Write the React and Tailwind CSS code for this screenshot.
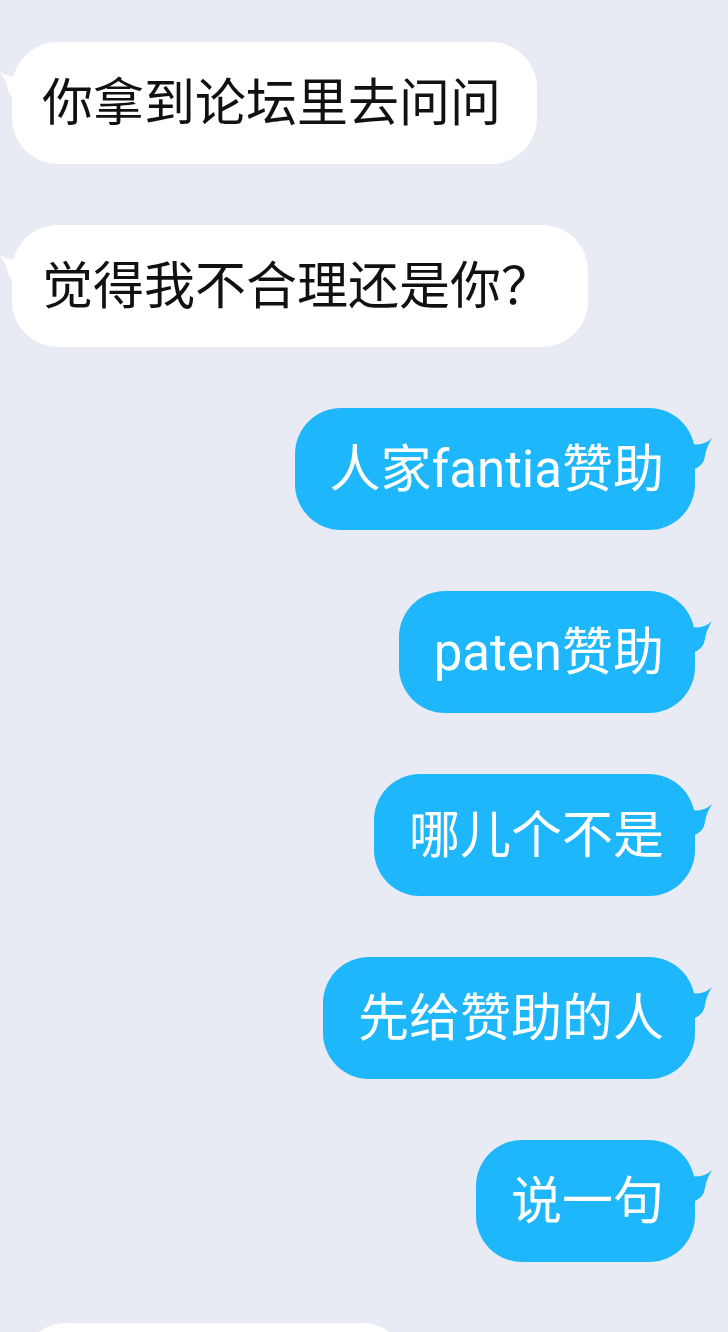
import React from "react";

const font = { fontFamily: 'Roboto, "Noto Sans CJK SC", sans-serif' };

function TailLeft() {
  return (
    <svg className="absolute left-[-12px] top-[26px]" width="20" height="34" viewBox="0 0 20 34">
      <path d="M20 8 Q10 10 0 4 Q7 14 8 22 Q10 30 20 34 Z" fill="#ffffff" />
    </svg>
  );
}

function TailRight() {
  return (
    <svg className="absolute right-[-19px] top-[28px]" width="22" height="34" viewBox="0 0 22 34">
      <path d="M0 8 Q12 10 20 2 Q14 12 13 20 Q12 30 0 34 Z" fill="#1fb7fb" />
    </svg>
  );
}

function Left({ text }) {
  return (
    <div className="flex justify-start pl-[12px]">
      <div className="relative h-[122px] flex items-center rounded-[46px] bg-white pl-[30px] pr-[36px] text-[51px] text-[#111111]">
        <TailLeft />
        <span className="leading-none">{text}</span>
      </div>
    </div>
  );
}

function Right({ text }) {
  return (
    <div className="flex justify-end pr-[33px]">
      <div className="relative h-[122px] flex items-center rounded-[46px] bg-[#1fb7fb] pl-[35px] pr-[31px] text-[51px] text-white">
        <TailRight />
        <span className="leading-none">{text}</span>
      </div>
    </div>
  );
}

export default function App() {
  return (
    <div className="h-[1332px] w-[728px] overflow-hidden bg-[#e8ebf3]" style={font}>
      <div className="flex flex-col gap-[61px] pt-[42px]">
        <Left text="你拿到论坛里去问问" />
        <Left text="觉得我不合理还是你？" />
        <Right text="人家fantia赞助" />
        <Right text="paten赞助" />
        <Right text="哪儿个不是" />
        <Right text="先给赞助的人" />
        <Right text="说一句" />
        <div className="flex justify-start pl-[20px]">
          <div className="h-[122px] w-[388px] rounded-[46px] bg-white" />
        </div>
      </div>
    </div>
  );
}
